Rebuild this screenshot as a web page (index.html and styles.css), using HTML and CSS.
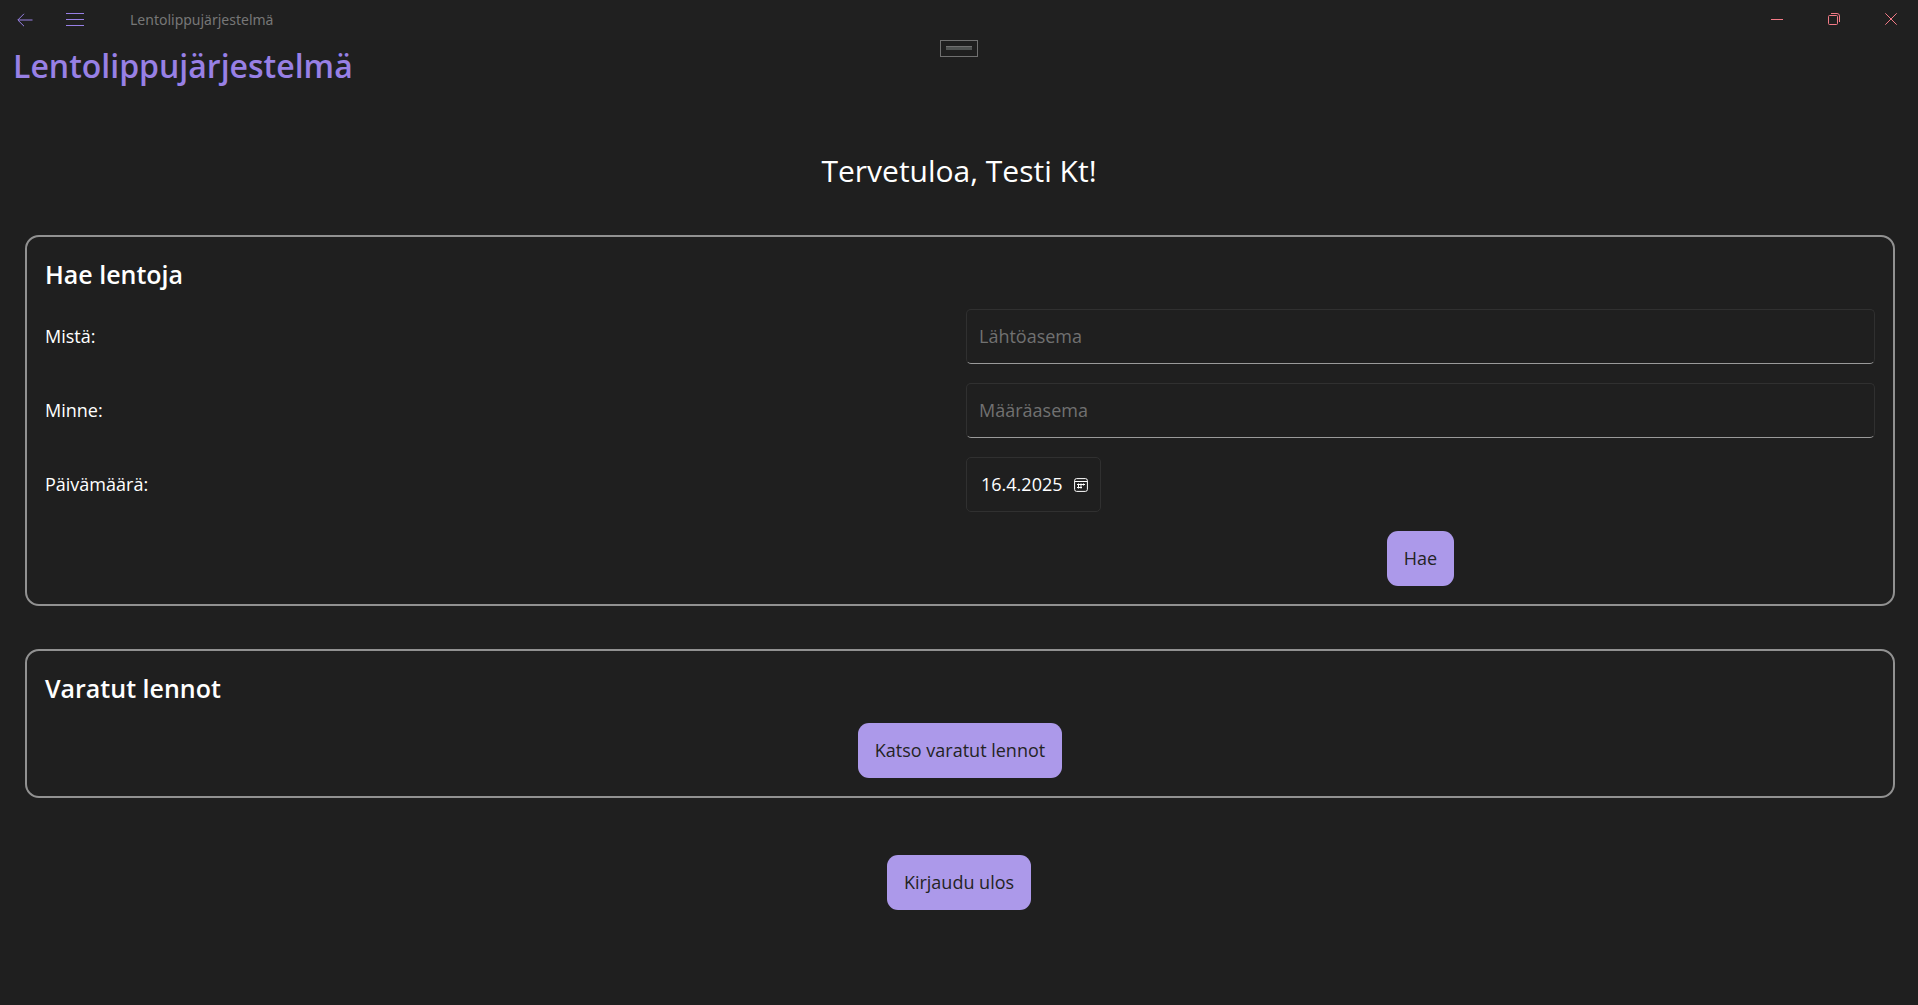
FILE: index.html
```html
<!DOCTYPE html>
<html lang="fi">
<head>
<meta charset="utf-8">
<meta name="viewport" content="width=device-width, initial-scale=1">
<title>Lentolippujärjestelmä</title>
<link rel="stylesheet" href="styles.css">
</head>
<body>
<header class="titlebar">
  <button class="nav-button" type="button" aria-label="Takaisin">
    <svg width="16" height="14" viewBox="0 0 16 14"><path d="M15.500 7H1M7 .8.800 7 7 13.200"/></svg>
  </button>
  <button class="nav-button" type="button" aria-label="Valikko">
    <svg width="18" height="14" viewBox="0 0 18 14"><path d="M0 .5h18M0 6.500h18M0 12.500h18"/></svg>
  </button>
  <span class="window-title">Lentolippujärjestelmä</span>
  <div class="window-controls">
    <button class="window-button" type="button" aria-label="Pienennä">
      <svg width="12" height="12" viewBox="0 0 12 12"><path d="M0 6.500h12"/></svg>
    </button>
    <button class="window-button" type="button" aria-label="Palauta">
      <svg width="12" height="12" viewBox="0 0 12 12"><rect x=".5" y="2.500" width="9" height="9" rx="1"/><path d="M3 .5h6a2.500 2.500 0 0 1 2.500 2.500v6"/></svg>
    </button>
    <button class="window-button" type="button" aria-label="Sulje">
      <svg width="12" height="12" viewBox="0 0 12 12"><path d="M.3.300l11.400 11.400M11.700.300L.3 11.700"/></svg>
    </button>
  </div>
  <div class="debug-handle"><span class="debug-grip"></span></div>
</header>
<main class="page">
  <h1 class="app-title">Lentolippujärjestelmä</h1>
  <p class="welcome">Tervetuloa, Testi Kt!</p>
  <form class="card">
    <h2 class="card-title">Hae lentoja</h2>
    <div class="form-grid">
      <label for="from">Mistä:</label>
      <input class="field" id="from" type="text" placeholder="Lähtöasema">
      <label for="to">Minne:</label>
      <input class="field" id="to" type="text" placeholder="Määräasema">
      <label for="date">Päivämäärä:</label>
      <div class="date-field">
        <input class="date-input" id="date" type="text" value="16.4.2025">
        <svg width="14" height="14" viewBox="0 0 14 14"><rect x=".6" y=".6" width="12.800" height="12.800" rx="2"/><path d="M1 3.500h12M3 6.500h8M3 9.500h5M4.500 5.500v5M7 5.500v5M9.500 5.500v2"/></svg>
      </div>
      <button class="action search" type="button">Hae</button>
    </div>
  </form>
  <section class="card">
    <h2 class="card-title">Varatut lennot</h2>
    <button class="action" type="button">Katso varatut lennot</button>
  </section>
  <button class="action logout" type="button">Kirjaudu ulos</button>
</main>
</body>
</html>
```
FILE: styles.css
```css
* {
  box-sizing: border-box;
}

body {
  margin: 0;
  min-height: 100vh;
  background: #1f1f1f;
  color: #fff;
  font-family: "Open Sans", sans-serif;
  font-size: 18px;
  line-height: 24px;
}

h1, h2, p {
  margin: 0;
}

button {
  border: 0;
  font: inherit;
  cursor: pointer;
}

svg {
  display: block;
  fill: none;
  stroke: currentColor;
}

.titlebar {
  position: relative;
  display: flex;
  align-items: center;
  height: 40px;
  background: #202020;
}

.nav-button {
  display: flex;
  justify-content: center;
  width: 50px;
  padding: 0;
  background: none;
  color: #9880e5;
}

.window-title {
  padding-left: 30px;
  color: #777;
  font-family: "Noto Sans", sans-serif;
  font-size: 14px;
}

.window-controls {
  display: flex;
  margin-left: auto;
}

.window-button {
  display: flex;
  justify-content: center;
  width: 57px;
  padding: 0 0 2px 2px;
  background: none;
  color: #f37b87;
}

.debug-handle {
  position: absolute;
  top: 40px;
  left: 50%;
  width: 38px;
  height: 17px;
  padding: 5px;
  transform: translateX(-50%);
  border: 1px solid #707070;
}

.debug-grip {
  display: block;
  height: 4px;
  border-top: 1px solid #707070;
  background: #505352;
}

.page {
  display: flex;
  flex-direction: column;
  align-items: center;
}

.app-title {
  align-self: flex-start;
  padding-left: 13px;
  color: #9880e5;
  font-size: 32px;
  font-weight: 600;
  line-height: 52px;
}

.welcome {
  margin: 58px 0 44px;
  font-size: 30px;
  line-height: 41px;
}

.card {
  display: flex;
  flex-direction: column;
  align-items: center;
  align-self: stretch;
  gap: 18px;
  margin: 0 23px 43px 25px;
  padding: 18px;
  border: 2px solid #919191;
  border-radius: 14px;
}

.card-title {
  align-self: flex-start;
  padding-top: 2px;
  font-size: 25px;
  font-weight: 600;
  line-height: 34px;
}

.form-grid {
  display: grid;
  grid-template-columns: 1fr 1fr;
  align-items: center;
  align-self: stretch;
  gap: 19px 12px;
}

.form-grid label {
  padding-bottom: 2px;
}

.field,
.date-field {
  height: 55px;
  border: 1px solid #303030;
  border-radius: 5px;
  background: transparent;
  color: #fff;
}

.field {
  width: 100%;
  padding: 0 12px 2px;
  border-bottom-color: #9a9a9a;
  font: inherit;
}

.field::placeholder {
  color: #717171;
  opacity: 1;
}

.date-field {
  display: flex;
  align-items: center;
  justify-content: space-between;
  width: 135px;
  padding: 0 12px 0 14px;
}

.date-input {
  width: 86px;
  padding: 0 0 2px;
  border: 0;
  background: none;
  color: inherit;
  font: inherit;
}

.action {
  height: 55px;
  padding: 0 17px 2px;
  border-radius: 11px;
  background: #ac99ea;
  color: #242424;
}

.search {
  grid-column: 2;
  justify-self: center;
}

.logout {
  margin: 14px 0 40px;
}
```
